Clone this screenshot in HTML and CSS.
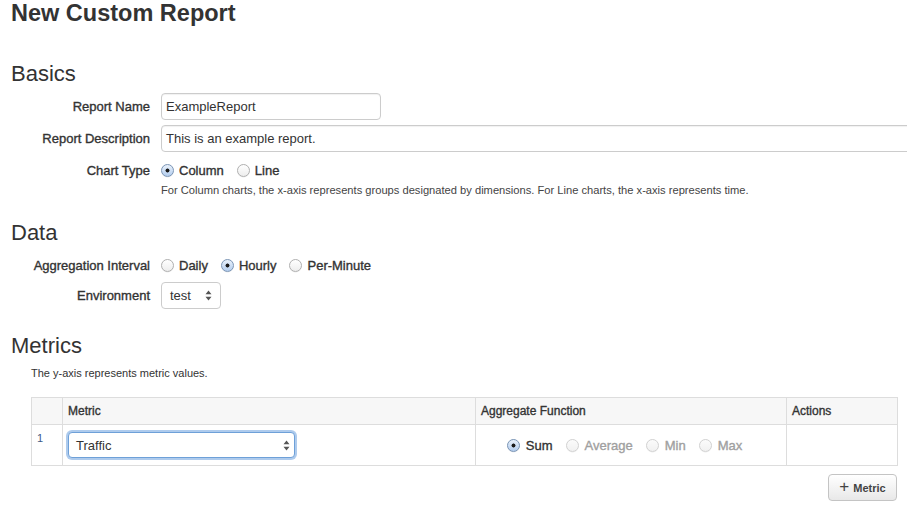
FILE: index.html
```html
<!DOCTYPE html>
<html>
<head>
<meta charset="utf-8">
<link rel="stylesheet" href="styles.css">
</head>
<body>
<div class="page">
  <h1 class="title">New Custom Report</h1>

  <h3 class="section basics">Basics</h3>
  <div class="row r-name">
    <label class="lbl">Report Name</label>
    <div class="input name">ExampleReport</div>
  </div>
  <div class="row r-desc">
    <label class="lbl">Report Description</label>
    <div class="input desc">This is an example report.</div>
  </div>
  <div class="row r-radio r-chart">
    <label class="lbl">Chart Type</label>
    <div class="radios">
      <span class="opt"><span class="radio on"></span>Column</span>
      <span class="opt"><span class="radio"></span>Line</span>
    </div>
  </div>
  <p class="help">For Column charts, the x-axis represents groups designated by dimensions. For Line charts, the x-axis represents time.</p>

  <h3 class="section data">Data</h3>
  <div class="row r-radio r-agg">
    <label class="lbl">Aggregation Interval</label>
    <div class="radios">
      <span class="opt"><span class="radio"></span>Daily</span>
      <span class="opt"><span class="radio on"></span>Hourly</span>
      <span class="opt"><span class="radio"></span>Per-Minute</span>
    </div>
  </div>
  <div class="row r-env">
    <label class="lbl">Environment</label>
    <div class="select env">
      <span class="val">test</span>
      <svg class="arrows" width="7" height="11" viewBox="0 0 7 11"><path d="M0.5 4.2 L3.5 0.6 L6.5 4.2 Z M0.5 6.8 L3.5 10.4 L6.5 6.8 Z" fill="#555"/></svg>
    </div>
  </div>

  <h3 class="section metrics">Metrics</h3>
  <div class="metrics-body">
    <p class="note">The y-axis represents metric values.</p>
    <table class="mtable">
      <colgroup>
        <col class="c-num"><col class="c-metric"><col class="c-agg"><col class="c-act">
      </colgroup>
      <thead>
        <tr class="head-row"><th></th><th>Metric</th><th>Aggregate Function</th><th>Actions</th></tr>
      </thead>
      <tbody>
        <tr class="body-row">
          <td class="num">1</td>
          <td class="metric-cell">
            <div class="select traffic">
              <span class="val">Traffic</span>
              <svg class="arrows" width="7" height="11" viewBox="0 0 7 11"><path d="M0.5 4.2 L3.5 0.6 L6.5 4.2 Z M0.5 6.8 L3.5 10.4 L6.5 6.8 Z" fill="#555"/></svg>
            </div>
          </td>
          <td class="agg-cell">
            <div class="radios agg">
              <span class="opt"><span class="radio on"></span>Sum</span>
              <span class="opt dis"><span class="radio"></span>Average</span>
              <span class="opt dis"><span class="radio"></span>Min</span>
              <span class="opt dis"><span class="radio"></span>Max</span>
            </div>
          </td>
          <td></td>
        </tr>
      </tbody>
    </table>
    <div class="actions">
      <button class="btn"><span class="plus">+</span>Metric</button>
    </div>
  </div>
</div>
</body>
</html>
```
FILE: styles.css
```css
html, body {
  margin: 0;
  padding: 0;
  background: #fff;
  overflow: hidden;
}
body {
  font-family: "Liberation Sans", Arial, sans-serif;
  font-size: 13px;
  color: #333;
}
.page {
  width: 907px;
  height: 518px;
  overflow: hidden;
  padding-left: 11px;
  box-sizing: border-box;
}
.title {
  margin: 0;
  font-size: 23.5px;
  line-height: 26px;
  font-weight: bold;
  color: #333;
}
.section {
  margin: 0;
  font-size: 22px;
  line-height: 26px;
  font-weight: normal;
  color: #333;
}
.basics { margin-top: 35px; }
.data { margin-top: 23px; }
.metrics { margin-top: 24px; }

.row {
  display: flex;
  align-items: center;
}
.lbl {
  width: 139px;
  padding-right: 11px;
  text-align: right;
  font-size: 13px;
  font-weight: normal;
  -webkit-text-stroke: 0.35px #333;
  flex: none;
}
.r-name { margin-top: 6px; height: 27px; }
.r-desc { margin-top: 5px; height: 27px; }
.r-chart { margin-top: 8px; height: 20px; }
.r-agg { margin-top: 9px; height: 20px; }
.r-env { margin-top: 7px; height: 27px; }

.input {
  height: 27px;
  box-sizing: border-box;
  border: 1px solid #ccc;
  border-radius: 4px;
  padding: 0 4px;
  line-height: 25px;
  font-size: 13px;
  color: #333;
  box-shadow: inset 0 1px 1px rgba(0,0,0,.06);
  background: #fff;
}
.input.name { width: 220px; }
.input.desc { width: 760px; flex: none; }

.radios {
  display: flex;
  align-items: center;
}
.opt {
  display: inline-flex;
  align-items: center;
  gap: 5px;
  margin-right: 13px;
  font-size: 13px;
  font-weight: normal;
  -webkit-text-stroke: 0.35px currentColor;
  color: #333;
}
.opt.dis { color: #a0a0a0; }
.radio {
  width: 13px;
  height: 13px;
  box-sizing: border-box;
  border-radius: 50%;
  border: 1px solid #b0b0b0;
  background: linear-gradient(#ffffff, #ededed);
  box-shadow: 0 0.5px 0.5px rgba(0,0,0,.08);
  flex: none;
}
.radio.on {
  border-color: #7b95b5;
  background:
    radial-gradient(circle at 50% 50%, #1a1a1a 0, #1a1a1a 1.7px, transparent 2.3px),
    linear-gradient(#e9f1fb, #b3cdee);
}
.opt.dis .radio {
  border-color: #d2d2d2;
  background: linear-gradient(#fbfbfb, #f1f1f1);
}

.help {
  margin: 3px 0 0 150px;
  font-size: 11.15px;
  line-height: 14px;
  color: #444;
}

.select {
  position: relative;
  box-sizing: border-box;
  border: 1px solid #ccc;
  border-radius: 4px;
  background: #fff;
  display: flex;
  align-items: center;
  font-size: 13px;
  color: #333;
}
.select .arrows {
  position: absolute;
  right: 8px;
  top: 50%;
  margin-top: -5.5px;
}
.select.env {
  width: 60px;
  height: 27px;
  padding-left: 8px;
}
.select.traffic {
  width: 227px;
  height: 26px;
  padding-left: 7px;
  border-color: #6ea0d8;
  box-shadow: 0 0 0 2px rgba(120, 168, 225, .6);
}
.select.traffic .arrows { right: 4px; }

.metrics-body {
  padding-left: 20px;
}
.note {
  margin: 7px 0 0 0;
  font-size: 11px;
  line-height: 14px;
  color: #333;
}
.mtable {
  margin-top: 17px;
  width: 866px;
  border-collapse: collapse;
  table-layout: fixed;
}
.c-num { width: 31px; }
.c-metric { width: 413px; }
.c-agg { width: 311px; }
.c-act { width: 111px; }
.mtable th, .mtable td {
  border: 1px solid #ddd;
  padding: 0 5px;
  text-align: left;
}
.head-row { height: 27px; }
.body-row { height: 41px; }
.mtable th {
  background: #f7f7f7;
  font-size: 12px;
  font-weight: normal;
  -webkit-text-stroke: 0.35px #333;
  color: #333;
}
.mtable td {
  background: #fff;
  vertical-align: middle;
}
.mtable td.num {
  vertical-align: top;
  padding-top: 7px;
  font-size: 11px;
  color: #3e5a86;
}
.radios.agg {
  justify-content: center;
  padding-top: 1px;
}
.radios.agg .opt { gap: 6px; }
.actions {
  display: flex;
  justify-content: flex-end;
  width: 866px;
  margin-top: 8px;
}
.btn {
  height: 27px;
  width: 69px;
  box-sizing: border-box;
  border: 1px solid #c4c4c4;
  border-radius: 4px;
  background: linear-gradient(#ffffff, #e8e8e8);
  font-family: "Liberation Sans", Arial, sans-serif;
  font-size: 11px;
  font-weight: bold;
  color: #444;
  padding: 0;
  display: flex;
  align-items: center;
  justify-content: center;
  gap: 4px;
}
.btn .plus {
  font-size: 17px;
  font-weight: normal;
  line-height: 1;
  margin-top: -2px;
  color: #444;
}
```
